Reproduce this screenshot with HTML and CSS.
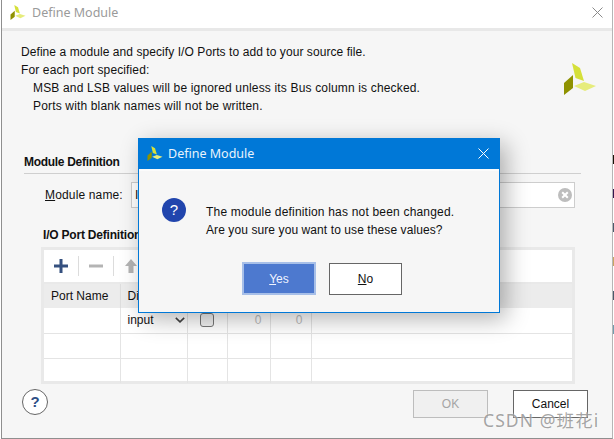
FILE: index.html
```html
<!DOCTYPE html>
<html lang="en">
<head>
<meta charset="utf-8">
<title>Define Module</title>
<link rel="stylesheet" href="styles.css">
</head>
<body>
<svg class="defs" aria-hidden="true">
  <symbol id="logo" viewBox="0 0 32 32">
    <path fill="#d5e03a" d="M8 0 16 5 20 18 11.500 15z"/>
    <path fill="#8f9200" d="M0 20 9 12V25L0 32z"/>
    <path fill="#e6ec7c" d="M10 23 20 19 32 23 21 28z"/>
  </symbol>
</svg>

<!-- Slivers of the application window sticking out behind the dialog -->
<div class="backdrop">
  <i class="mark mark-dark"></i>
  <i class="mark mark-purple"></i>
  <i class="mark mark-slate"></i>
  <i class="mark mark-amber"></i>
  <i class="mark mark-slate"></i>
  <i class="mark mark-teal"></i>
</div>

<section class="window">
  <header class="titlebar">
    <svg class="logo-small"><use href="#logo"/></svg>
    <span class="title">Define Module</span>
    <svg class="close" viewBox="0 0 11 11"><path d="M.5.500 10.500 10.500M10.500.500.500 10.500"/></svg>
  </header>
  <div class="content">
    <div class="intro">
      <div class="intro-text">
        <p class="line-first">Define a module and specify I/O Ports to add to your source file.</p>
        <p class="line-second">For each port specified:</p>
        <p class="indent">MSB and LSB values will be ignored unless its Bus column is checked.</p>
        <p class="indent">Ports with blank names will not be written.</p>
      </div>
      <svg class="logo-large"><use href="#logo"/></svg>
    </div>

    <h2 class="section-title">Module Definition</h2>
    <div class="name-row">
      <label class="name-label"><u>M</u>odule name:</label>
      <div class="name-input">
        <span>I</span>
        <svg class="clear" viewBox="0 0 14 14"><circle cx="7" cy="7" r="7" fill="#bdbdbd"/><path d="M4.200 4.200 9.800 9.800M9.800 4.200 4.200 9.800" stroke="#fff" stroke-width="2"/></svg>
      </div>
    </div>

    <h3 class="ports-title">I/O Port Definitions</h3>
    <div class="ports">
      <div class="toolbar">
        <svg class="tool" viewBox="0 0 16 16"><path fill="#35507f" d="M6.500 1h3v5.500H15v3H9.500V15h-3V9.500H1v-3h5.500z"/></svg>
        <i class="tool-sep"></i>
        <svg class="tool" viewBox="0 0 16 16"><path fill="#b4b4b4" d="M1 6.500h14v3H1z"/></svg>
        <i class="tool-sep"></i>
        <svg class="tool" viewBox="0 0 16 16"><path fill="#b4b4b4" d="M8 1 14 8H10.500V15h-5V8H2z"/></svg>
      </div>
      <table class="grid">
        <colgroup>
          <col class="c-name"><col class="c-dir"><col class="c-bus"><col class="c-msb"><col class="c-lsb"><col>
        </colgroup>
        <thead>
          <tr><th>Port Name</th><th>Direction</th><th>Bus</th><th>MSB</th><th>LSB</th><th></th></tr>
        </thead>
        <tbody>
          <tr>
            <td></td>
            <td><div class="select">input<svg viewBox="0 0 10 6"><path d="M.8.800 5 4.800 9.200.800"/></svg></div></td>
            <td><span class="check"></span></td>
            <td class="num">0</td>
            <td class="num">0</td>
            <td></td>
          </tr>
          <tr><td></td><td></td><td></td><td></td><td></td><td></td></tr>
          <tr><td></td><td></td><td></td><td></td><td></td><td></td></tr>
        </tbody>
      </table>
    </div>

    <footer class="actions">
      <span class="help">?</span>
      <button class="btn btn-disabled">OK</button>
      <button class="btn btn-cancel">Cancel</button>
    </footer>
  </div>
</section>

<section class="modal">
  <header class="modal-bar">
    <svg class="logo-small"><use href="#logo"/></svg>
    <span class="modal-title">Define Module</span>
    <svg class="modal-close" viewBox="0 0 11 11"><path d="M.5.500 10.500 10.500M10.500.500.500 10.500"/></svg>
  </header>
  <div class="modal-body">
    <div class="message">
      <span class="question">?</span>
      <div class="message-text">
        <p>The module definition has not been changed.</p>
        <p class="message-second">Are you sure you want to use these values?</p>
      </div>
    </div>
    <div class="modal-actions">
      <button class="btn btn-primary"><u>Y</u>es</button>
      <button class="btn btn-no"><u>N</u>o</button>
    </div>
  </div>
</section>

<div class="watermark">CSDN @班花i</div>
</body>
</html>
```
FILE: styles.css
```css
* { box-sizing: border-box; }

html, body {
  margin: 0;
  height: 100%;
  overflow: hidden;
  background: #fff;
}

body {
  position: relative;
  font-family: "Liberation Sans", Arial, "Noto Sans CJK SC", sans-serif;
  font-size: 12px;
  color: #111;
}

p, h2, h3 { margin: 0; }
.defs { position: absolute; width: 0; height: 0; }

/* Application window behind the dialog */
.backdrop {
  position: absolute;
  left: 613px;
  top: 155px;
  width: 1px;
  display: flex;
  flex-direction: column;
  gap: 25px;
}

.mark { display: block; width: 1px; height: 9px; }
.mark-dark { background: #1a1208; }
.mark-purple { background: #35164f; }
.mark-slate { background: #4a5a6c; }
.mark-amber { background: #c9a462; }
.mark-teal { background: #6f9db0; }

/* Main dialog */
.window {
  position: absolute;
  left: 1px;
  top: 0;
  width: 612px;
  height: 439px;
  border-left: 1px solid #8f8f8f;
  border-right: 1px solid #b5b5b5;
  border-bottom: 1px solid #8f8f8f;
  background: #f6f6f6;
  display: flex;
  flex-direction: column;
}

.titlebar {
  height: 31px;
  flex: none;
  display: flex;
  align-items: center;
  padding: 0 9px 3px 8px;
  background: #fff;
  border-bottom: 3px solid #e8e8e8;
}

.logo-small { width: 16px; height: 15px; flex: none; }

.title {
  margin-left: 6px;
  font-family: "Noto Sans", sans-serif;
  font-size: 12.500px;
  color: #9a9a9a;
}

.close {
  width: 11px;
  height: 11px;
  margin-left: auto;
  fill: none;
  stroke: #8a8a8a;
}

.content {
  flex: 1;
  display: flex;
  flex-direction: column;
  padding: 12px 0 0 19px;
}

.intro {
  display: flex;
  height: 95px;
}

.intro-text { line-height: 18px; width: 540px; }
.line-first { letter-spacing: .07px; }
.line-second { letter-spacing: .125px; }
.indent { padding-left: 12px; letter-spacing: .16px; }

.logo-large {
  width: 32px;
  height: 32px;
  margin: 20px 0 0 3px;
}

.section-title {
  width: 557px;
  margin: 16px 0 0 3px;
  height: 20px;
  font-size: 12px;
  line-height: 17px;
  letter-spacing: -.3px;
  font-weight: 700;
  border-bottom: 1px solid #cfcfcf;
}

.name-row {
  display: flex;
  align-items: center;
  margin: 8px 0 0 24px;
}

.name-label { width: 86px; letter-spacing: .15px; }

.name-input {
  width: 444px;
  height: 26px;
  padding: 0 2px 0 3px;
  display: flex;
  align-items: center;
  justify-content: space-between;
  background: #fff;
  border: 1px solid #cdcdcd;
}

.clear { width: 14px; height: 14px; }

.ports-title {
  margin: 20px 0 0 22px;
  font-size: 12px;
  line-height: 14px;
  letter-spacing: -.2px;
  font-weight: 700;
}

/* Port table */
.ports {
  width: 534px;
  height: 137px;
  margin: 5px 0 0 20px;
  border: 3px solid #e9e9e9;
  background: #fff;
}

.toolbar {
  height: 34px;
  display: flex;
  align-items: center;
  padding: 0 0 0 9px;
  border-bottom: 2px solid #e9e9e9;
}

.tool { width: 16px; height: 16px; flex: none; }

.tool-sep {
  width: 1px;
  height: 20px;
  margin: 0 9px;
  background: #dcdcdc;
}

.grid {
  width: 528px;
  border-collapse: collapse;
  table-layout: fixed;
}

.c-name { width: 76px; }
.c-dir { width: 67px; }
.c-bus { width: 40px; }
.c-msb { width: 43px; }
.c-lsb { width: 41px; }

.grid th {
  height: 24px;
  padding: 0 0 0 7px;
  background: #ececec;
  text-align: left;
  font-weight: 400;
  border-right: 1px solid #dedede;
}

.grid td {
  height: 25px;
  padding: 0;
  border-right: 1px solid #e4e4e4;
  border-bottom: 1px solid #e4e4e4;
}

.grid tr:last-child td { border-bottom: 0; }
.grid td:last-child, .grid th:last-child { border-right: 0; }

.select {
  display: flex;
  align-items: center;
  justify-content: space-between;
  padding: 0 2px 0 7px;
}

.select svg {
  width: 10px;
  height: 6px;
  fill: none;
  stroke: #444;
  stroke-width: 1.600;
}

.check {
  display: block;
  width: 14px;
  height: 14px;
  margin-left: 12px;
  background: #f2f2f2;
  border: 1px solid #777;
  border-radius: 3px;
}

.num {
  text-align: right;
  padding-right: 8px !important;
  color: #bcbcbc;
}

/* Footer buttons */
.actions {
  display: flex;
  align-items: flex-start;
  margin-top: 6px;
  padding-left: 1px;
}

.help {
  width: 26px;
  height: 26px;
  margin-top: -1px;
  border: 1px solid #666;
  border-radius: 50%;
  background: #fff;
  color: #2f4f86;
  font-size: 15px;
  font-weight: 700;
  line-height: 24px;
  text-align: center;
}

.btn {
  font: inherit;
  padding: 0;
  color: #111;
  background: #fff;
  border: 1px solid #666;
}

.btn-disabled {
  width: 75px;
  height: 28px;
  margin-left: 365px;
  color: #a5a5a5;
  background: #f0f0f0;
  border-color: #bdbdbd;
}

.btn-cancel { width: 75px; height: 28px; margin-left: 25px; }

/* Confirmation dialog */
.modal {
  position: absolute;
  left: 138px;
  top: 138px;
  width: 362px;
  height: 175px;
  display: flex;
  flex-direction: column;
  background: #f6f6f6;
  border: 1px solid #0078d7;
  box-shadow: 6px 6px 22px rgba(0, 0, 0, .3);
}

.modal-bar {
  height: 30px;
  flex: none;
  display: flex;
  align-items: center;
  padding: 0 10px 2px 8px;
  background: #0078d7;
}

.modal-title {
  margin-left: 5px;
  font-family: "Noto Sans", sans-serif;
  font-size: 12.500px;
  color: #e8f3fc;
}

.modal-close {
  width: 11px;
  height: 11px;
  margin-left: auto;
  fill: none;
  stroke: #fff;
}

.modal-body {
  flex: 1;
  border-top: 2px solid #fbfbfb;
  padding: 27px 0 0 23px;
}

.message { display: flex; align-items: flex-start; }

.question {
  width: 24px;
  height: 24px;
  flex: none;
  border-radius: 50%;
  background: #2145ad;
  color: #fff;
  font-size: 15px;
  line-height: 24px;
  text-align: center;
}

.message-text {
  margin: 5px 0 0 20px;
  line-height: 18px;
  letter-spacing: .19px;
}

.message-second { letter-spacing: .09px; }

.modal-actions {
  display: flex;
  align-items: flex-end;
  gap: 13px;
  margin: 23px 0 0 80px;
}

.btn-primary {
  width: 74px;
  height: 33px;
  color: #f0f4ff;
  background: #4d79cf;
  border: 2px solid #a7bfe8;
  outline: 1px solid #4d79cf;
  outline-offset: -3px;
}

.btn-no { width: 73px; height: 32px; }

/* Site watermark */
.watermark {
  position: absolute;
  left: 483px;
  top: 409px;
  font-family: "Noto Sans", "Noto Sans CJK SC", sans-serif;
  font-size: 17.500px;
  line-height: 22px;
  letter-spacing: 1.100px;
  white-space: nowrap;
  color: rgba(135, 135, 135, .75);
  text-shadow: 0 0 2px rgba(255, 255, 255, .9);
}
```
